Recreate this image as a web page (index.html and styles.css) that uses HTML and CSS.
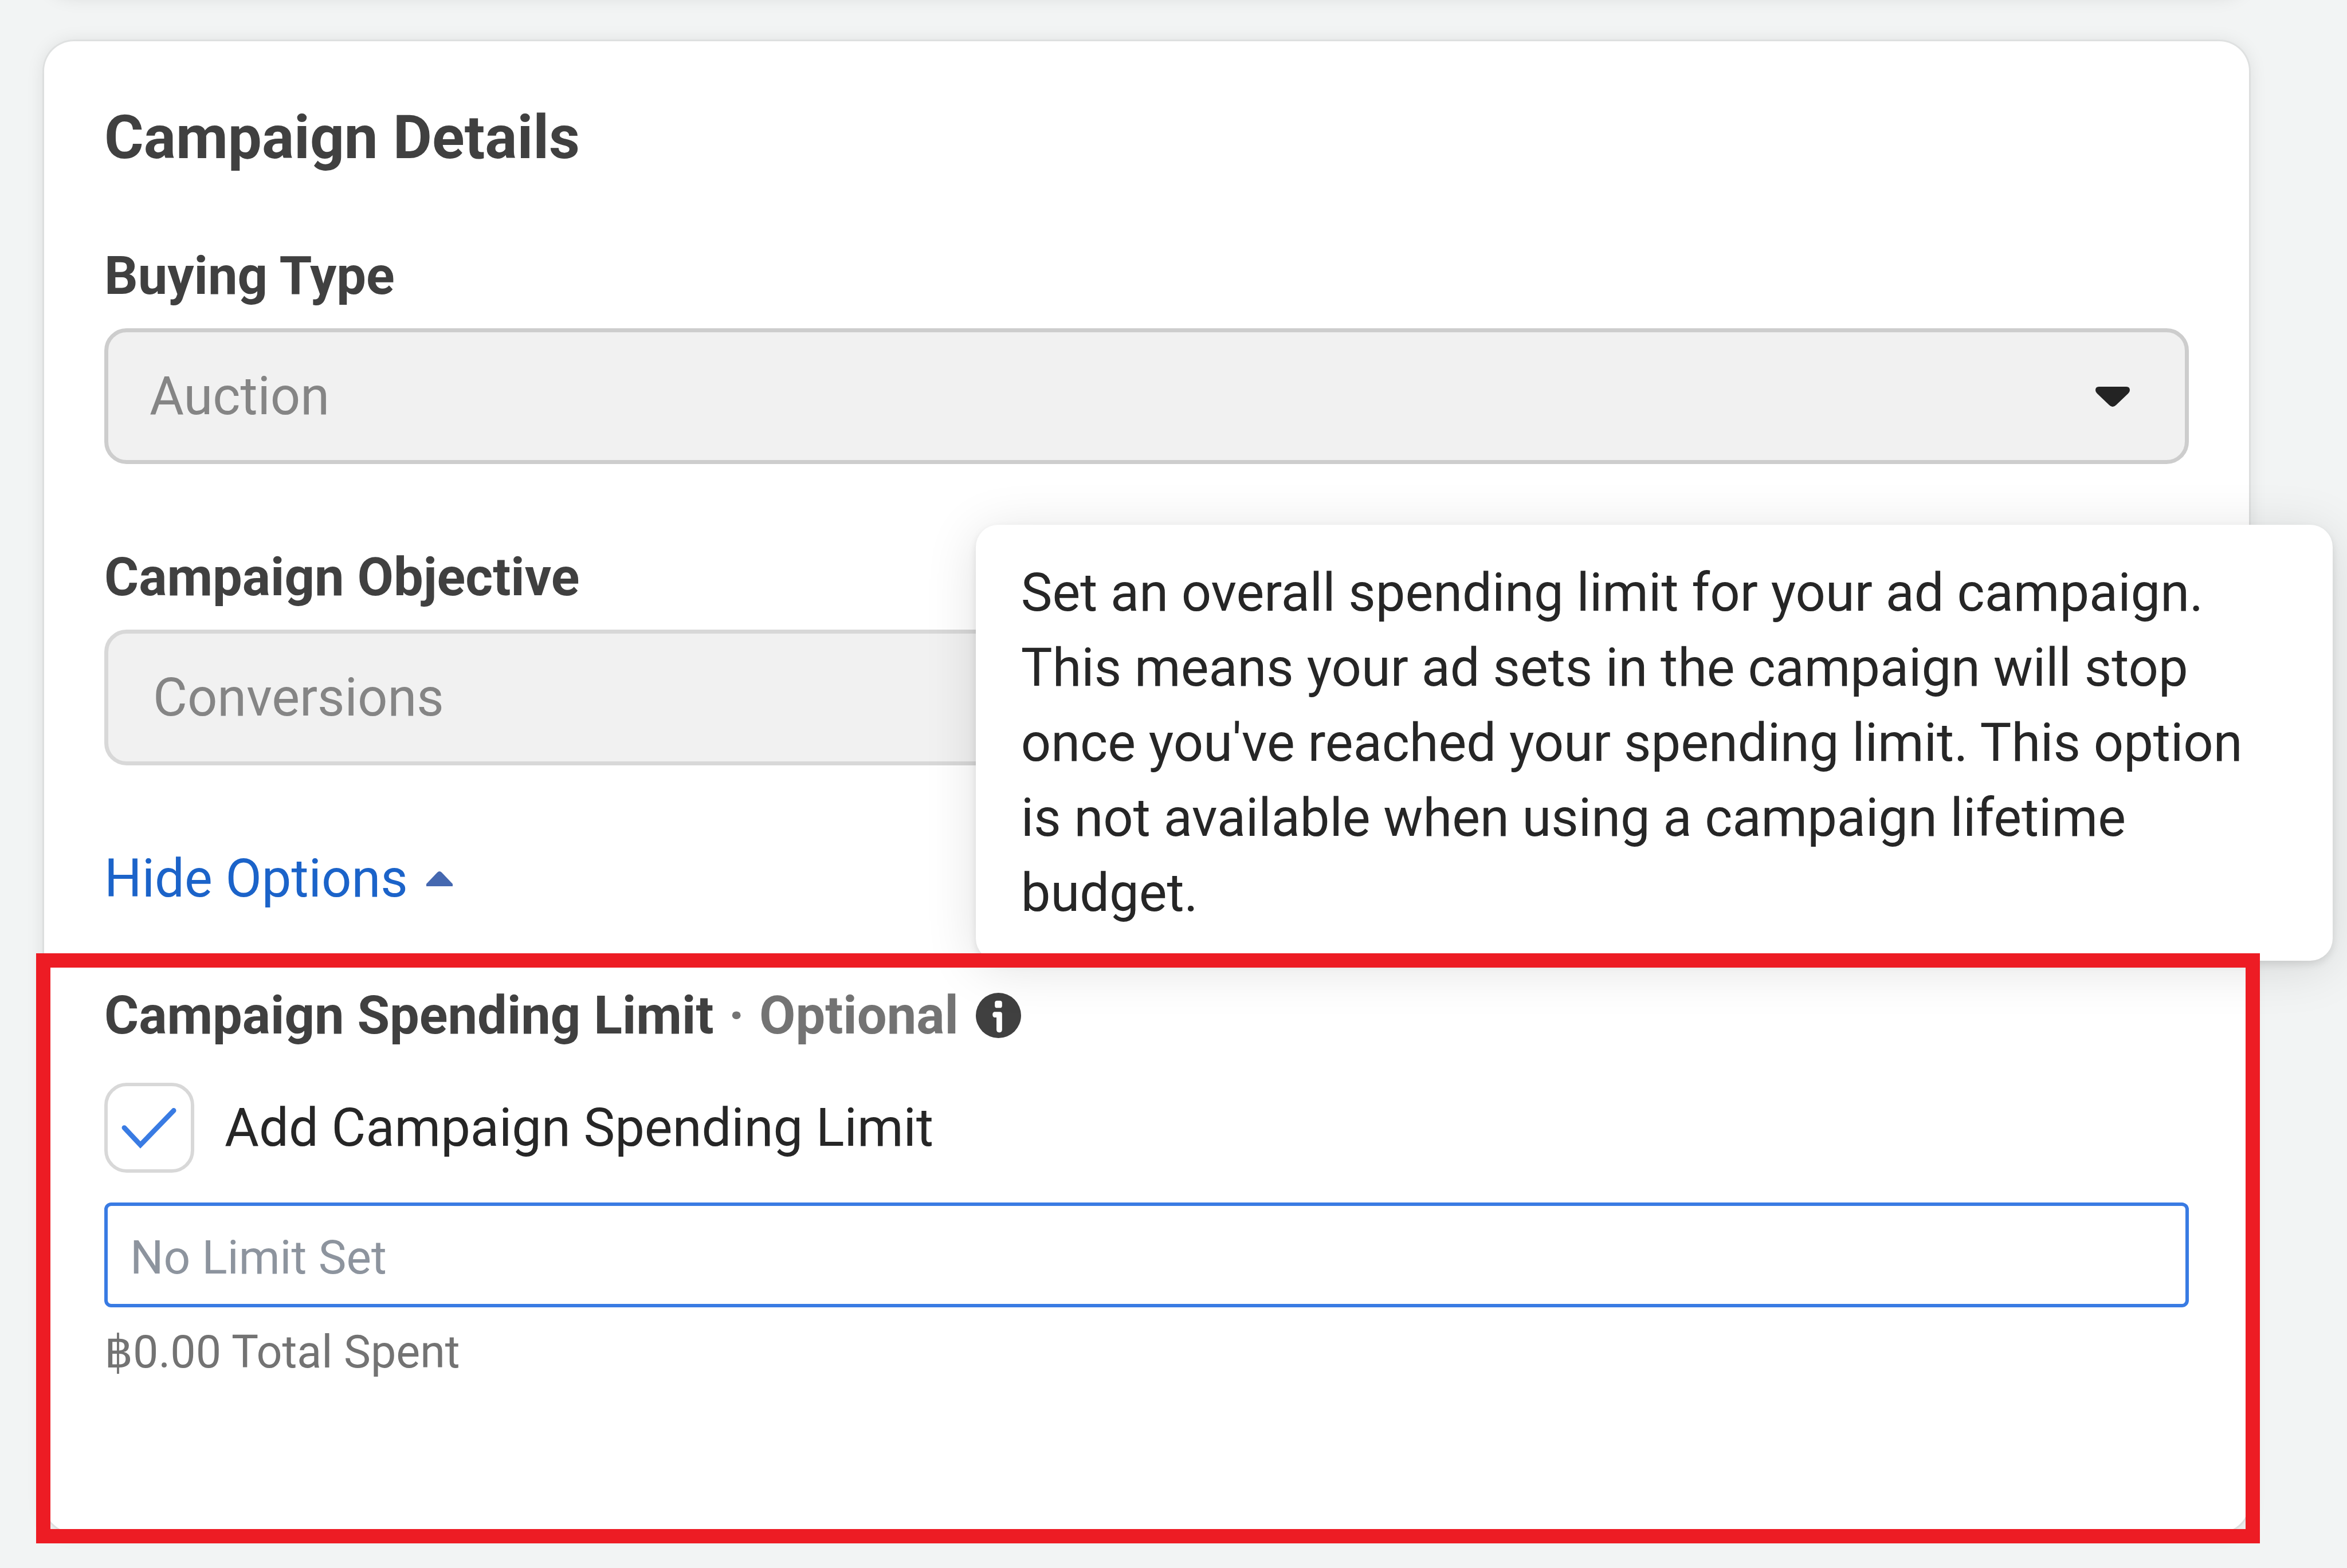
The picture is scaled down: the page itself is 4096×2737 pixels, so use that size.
FILE: index.html
```html
<!DOCTYPE html>
<html lang="en">
<head>
<meta charset="utf-8">
<meta name="viewport" content="width=device-width, initial-scale=1">
<title>Campaign Details</title>
<link rel="stylesheet" href="styles.css">
</head>
<body>
<main class="page">
  <div class="card card-previous"></div>

  <form class="card campaign">
    <h1 class="title">Campaign Details</h1>

    <div class="field">
      <label class="label" for="buying-type">Buying Type</label>
      <div class="select-wrap">
        <select class="select" id="buying-type" disabled>
          <option>Auction</option>
        </select>
        <svg class="select-arrow" viewBox="0 0 60 36" aria-hidden="true"><path d="M6 0H54Q60 0 60 6Q60 9 57 12L36 32Q30 38 24 32L3 12Q0 9 0 6Q0 0 6 0Z"/></svg>
      </div>
    </div>

    <div class="field">
      <label class="label" for="objective">Campaign Objective</label>
      <div class="select-wrap">
        <select class="select select-light" id="objective" disabled>
          <option>Conversions</option>
        </select>
      </div>
    </div>

    <button class="toggle" type="button" aria-expanded="true">Hide Options
      <svg class="toggle-arrow" viewBox="0 0 46 26" aria-hidden="true"><path d="M19 2Q23 -2 27 2L46 22V26H0V22Z"/></svg>
    </button>

    <section class="limit">
      <h2 class="label limit-title">
        <span>Campaign Spending Limit<span class="optional"> <span class="dot">·</span> Optional</span></span>
        <span class="info">
          <svg class="info-icon" viewBox="0 0 81 81" aria-hidden="true">
            <circle class="info-disc" cx="40.500" cy="40.500" r="40.500"/>
            <rect class="info-mark" x="34" y="14" width="13" height="13" rx="4"/>
            <path class="info-mark" d="M33 34H43Q47 34 47 38V66Q47 71 42 71Q37 71 37 66V44H33Q30 43 30 39Q30 35 33 34Z"/>
          </svg>
          <span class="tooltip" role="tooltip">Set an overall spending limit for your ad campaign. This means your ad sets in the campaign will stop once you've reached your spending limit. This option is not available when using a campaign lifetime budget.</span>
        </span>
      </h2>

      <label class="check">
        <span class="check-wrap">
          <input class="check-box" type="checkbox" checked>
          <svg class="check-mark" viewBox="0 0 162 162" aria-hidden="true"><path d="M36 81L65 112L125 50"/></svg>
        </span>
        Add Campaign Spending Limit
      </label>

      <input class="amount" type="text" placeholder="No Limit Set" aria-label="Campaign spending limit">
      <p class="spent">฿0.00 Total Spent</p>
    </section>
  </form>
</main>
</body>
</html>
```
FILE: styles.css
```css
* {
  box-sizing: border-box;
}

body {
  margin: 0;
  background: #f2f4f4;
  color: #262626;
  font-family: Roboto, "Liberation Sans", sans-serif;
  font-size: 92px;
  line-height: 131px;
}

.page {
  min-height: 100vh;
  padding: 0 171px 0 77px;
  overflow: hidden;
}

.card {
  border-radius: 52px;
  background: #fff;
  box-shadow: 0 0 0 3px rgba(0, 0, 0, 0.04), 0 2px 32px rgba(0, 0, 0, 0.1);
}

/* Only the lower shadow of the preceding card shows at the top. */
.card-previous {
  height: 160px;
  margin-top: -167px;
}

.campaign {
  margin-top: 79px;
  padding: 103px 105px 262px;
}

.title {
  margin: 0 0 109px;
  color: #404040;
  font-size: 105px;
  font-weight: 700;
  line-height: 132px;
}

.field {
  margin-bottom: 132px;
}

.label {
  display: block;
  margin: 0;
  color: #404040;
  font-size: 92px;
  font-weight: 700;
  line-height: 131px;
}

.select-wrap {
  position: relative;
  margin-top: 26px;
}

.select {
  display: block;
  width: 100%;
  height: 237px;
  padding: 0 72px;
  appearance: none;
  border: 7px solid #cdcdcd;
  border-radius: 39px;
  background: #f1f1f1;
  color: #858585;
  font: inherit;
  opacity: 1;
}

.select-light {
  padding: 0 78px;
  border-color: #d8d8d8;
}

.select-arrow {
  position: absolute;
  top: 102px;
  right: 103px;
  width: 60px;
  height: 36px;
  fill: #232323;
}

.toggle {
  display: flex;
  align-items: center;
  gap: 32px;
  padding: 0;
  border: 0;
  background: none;
  color: #1b63c9;
  font: inherit;
}

.toggle-arrow {
  width: 46px;
  height: 26px;
  fill: #4568b0;
}

.limit {
  position: relative;
  margin-top: 108px;
}

/* Highlight drawn round the whole section, over the tooltip. */
.limit::after {
  content: "";
  position: absolute;
  inset: -43px -124px -281px -119px;
  z-index: 2;
  border: 25px solid #ed1c24;
  pointer-events: none;
}

.limit-title {
  display: flex;
  align-items: center;
  gap: 30px;
}

.optional {
  color: #737373;
}

.dot {
  padding: 0 3px;
}

.info {
  position: relative;
  width: 79px;
  height: 79px;
}

.info-icon {
  display: block;
  width: 100%;
  height: 100%;
}

.info-disc {
  fill: #404040;
}

.info-mark {
  fill: #fff;
}

.tooltip {
  position: absolute;
  bottom: calc(100% + 56px);
  left: 0;
  z-index: 1;
  width: 2368px;
  padding: 53px 79px;
  border-radius: 39px;
  background: #fff;
  box-shadow: 0 6px 14px rgba(0, 0, 0, 0.1), 0 12px 92px rgba(0, 0, 0, 0.12);
  color: #262626;
  font-weight: 400;
}

.check {
  display: flex;
  align-items: center;
  gap: 53px;
  margin: 52px 0;
}

.check-wrap {
  position: relative;
  width: 157px;
  height: 157px;
}

.check-box {
  display: block;
  width: 100%;
  height: 100%;
  margin: 0;
  appearance: none;
  border: 6px solid #d8d8d8;
  border-radius: 39px;
  background: #fff;
}

.check-mark {
  position: absolute;
  inset: 0;
  fill: none;
  stroke: #397be3;
  stroke-width: 9;
  stroke-linecap: round;
}

.amount {
  display: block;
  width: 100%;
  height: 183px;
  padding: 8px 39px 0;
  border: 6px solid #397be3;
  border-radius: 12px;
  background: #fff;
  color: #262626;
  font: inherit;
  font-size: 82px;
}

.amount::placeholder {
  color: #8d949e;
  opacity: 1;
}

.spent {
  margin: 26px 0 0;
  color: #737373;
  font-size: 79px;
  line-height: 105px;
}
```
